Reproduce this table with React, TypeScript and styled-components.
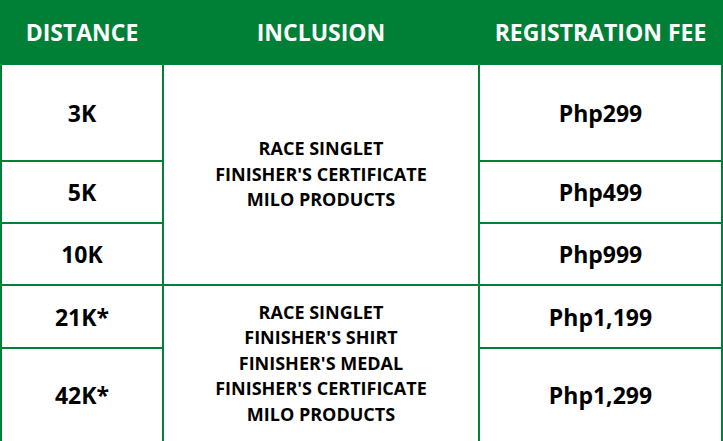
import React from "react";
import styled, { createGlobalStyle } from "styled-components";

const GREEN = "#008037";

const Global = createGlobalStyle`
  html, body { margin: 0; padding: 0; background: #fff; }
  body { font-family: "Open Sans", "Noto Sans", sans-serif; }
`;

const Table = styled.div`
  width: 723px;
  display: grid;
  grid-template-columns: 160px 314px 241px;
  grid-template-rows: 63px 95px 60px 60px 61px 92px;
  column-gap: 2px;
  row-gap: 2px;
  padding: 0 2px 2px 2px;
  background: ${GREEN};
  box-sizing: border-box;
`;

const HeadCell = styled.div`
  display: flex;
  align-items: center;
  justify-content: center;
  color: #fff;
  font-weight: 700;
  font-size: 23px;
  background: ${GREEN};
`;

const Cell = styled.div<{ $span?: number }>`
  background: #fff;
  display: flex;
  align-items: center;
  justify-content: center;
  color: #000;
  font-weight: 700;
  font-size: 23px;
  ${(p) => (p.$span ? `grid-row: span ${p.$span};` : "")}
`;

const Inclusion = styled.div`
  text-align: center;
  font-size: 18px;
  line-height: 25.5px;
  font-weight: 700;
  color: #000;
`;

type Row = { d: string; fee: string; inc?: string[]; span?: number };

const rows: Row[] = [
  { d: "3K", fee: "Php299", inc: ["RACE SINGLET", "FINISHER'S CERTIFICATE", "MILO PRODUCTS"], span: 3 },
  { d: "5K", fee: "Php499" },
  { d: "10K", fee: "Php999" },
  {
    d: "21K*",
    fee: "Php1,199",
    inc: ["RACE SINGLET", "FINISHER'S SHIRT", "FINISHER'S MEDAL", "FINISHER'S CERTIFICATE", "MILO PRODUCTS"],
    span: 2,
  },
  { d: "42K*", fee: "Php1,299" },
];

export default function App() {
  return (
    <>
      <Global />
      <Table>
        <HeadCell>DISTANCE</HeadCell>
        <HeadCell>INCLUSION</HeadCell>
        <HeadCell>REGISTRATION FEE</HeadCell>
        {rows.map((r) => (
          <React.Fragment key={r.d}>
            <Cell>{r.d}</Cell>
            {r.inc && (
              <Cell $span={r.span}>
                <Inclusion>
                  {r.inc.map((l) => (
                    <div key={l}>{l}</div>
                  ))}
                </Inclusion>
              </Cell>
            )}
            <Cell>{r.fee}</Cell>
          </React.Fragment>
        ))}
      </Table>
    </>
  );
}
